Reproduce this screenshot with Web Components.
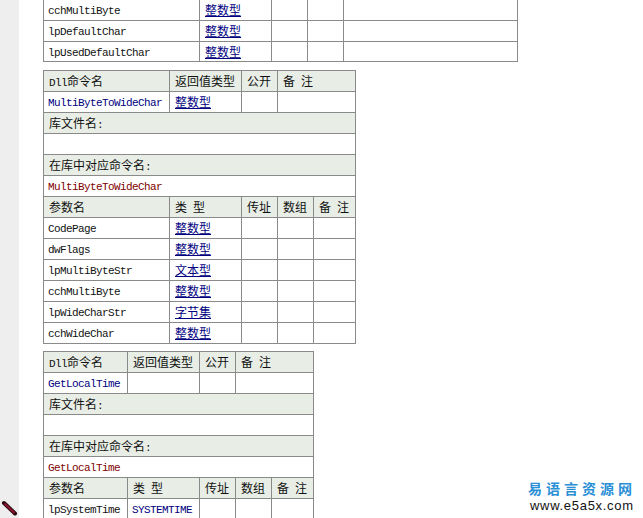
<!DOCTYPE html>
<html lang="zh-CN">
<head>
<meta charset="utf-8">
<style>
  html, body { margin: 0; background: #fff; overflow: hidden; }
</style>
</head>
<body>
<doc-page>
  <api-table style="--cols:156px 72px 36px 36px 174px; margin-bottom:8px">
    <api-row><api-cell>cchMultiByte</api-cell><api-cell kind="link">整数型</api-cell><api-cell></api-cell><api-cell></api-cell><api-cell></api-cell></api-row>
    <api-row><api-cell>lpDefaultChar</api-cell><api-cell kind="link">整数型</api-cell><api-cell></api-cell><api-cell></api-cell><api-cell></api-cell></api-row>
    <api-row short><api-cell>lpUsedDefaultChar</api-cell><api-cell kind="link">整数型</api-cell><api-cell></api-cell><api-cell></api-cell><api-cell></api-cell></api-row>
  </api-table>

  <api-table style="--cols:126px 72px 36px 36px 42px">
    <api-row head><api-cell><tiny-text>Dll</tiny-text>命令名</api-cell><api-cell>返回值类型</api-cell><api-cell>公开</api-cell><api-cell span="2">备 注</api-cell></api-row>
    <api-row><api-cell kind="name">MultiByteToWideChar</api-cell><api-cell kind="link">整数型</api-cell><api-cell></api-cell><api-cell span="2"></api-cell></api-row>
    <api-row head><api-cell span="5">库文件名<tiny-text>:</tiny-text></api-cell></api-row>
    <api-row><api-cell span="5"></api-cell></api-row>
    <api-row head><api-cell span="5">在库中对应命令名<tiny-text>:</tiny-text></api-cell></api-row>
    <api-row><api-cell span="5" kind="alias">MultiByteToWideChar</api-cell></api-row>
    <api-row head><api-cell>参数名</api-cell><api-cell>类 型</api-cell><api-cell>传址</api-cell><api-cell>数组</api-cell><api-cell>备 注</api-cell></api-row>
    <api-row><api-cell>CodePage</api-cell><api-cell kind="link">整数型</api-cell><api-cell></api-cell><api-cell></api-cell><api-cell></api-cell></api-row>
    <api-row><api-cell>dwFlags</api-cell><api-cell kind="link">整数型</api-cell><api-cell></api-cell><api-cell></api-cell><api-cell></api-cell></api-row>
    <api-row><api-cell>lpMultiByteStr</api-cell><api-cell kind="link">文本型</api-cell><api-cell></api-cell><api-cell></api-cell><api-cell></api-cell></api-row>
    <api-row><api-cell>cchMultiByte</api-cell><api-cell kind="link">整数型</api-cell><api-cell></api-cell><api-cell></api-cell><api-cell></api-cell></api-row>
    <api-row><api-cell>lpWideCharStr</api-cell><api-cell kind="link">字节集</api-cell><api-cell></api-cell><api-cell></api-cell><api-cell></api-cell></api-row>
    <api-row><api-cell>cchWideChar</api-cell><api-cell kind="link">整数型</api-cell><api-cell></api-cell><api-cell></api-cell><api-cell></api-cell></api-row>
  </api-table>

  <api-table style="--cols:84px 72px 36px 36px 42px">
    <api-row head><api-cell><tiny-text>Dll</tiny-text>命令名</api-cell><api-cell>返回值类型</api-cell><api-cell>公开</api-cell><api-cell span="2">备 注</api-cell></api-row>
    <api-row><api-cell kind="name">GetLocalTime</api-cell><api-cell></api-cell><api-cell></api-cell><api-cell span="2"></api-cell></api-row>
    <api-row head><api-cell span="5">库文件名<tiny-text>:</tiny-text></api-cell></api-row>
    <api-row><api-cell span="5"></api-cell></api-row>
    <api-row head><api-cell span="5">在库中对应命令名<tiny-text>:</tiny-text></api-cell></api-row>
    <api-row><api-cell span="5" kind="alias">GetLocalTime</api-cell></api-row>
    <api-row head><api-cell>参数名</api-cell><api-cell>类 型</api-cell><api-cell>传址</api-cell><api-cell>数组</api-cell><api-cell>备 注</api-cell></api-row>
    <api-row><api-cell>lpSystemTime</api-cell><api-cell kind="type">SYSTEMTIME</api-cell><api-cell></api-cell><api-cell></api-cell><api-cell></api-cell></api-row>
  </api-table>
</doc-page>

<script>
const pageTemplate = document.createElement("template");
pageTemplate.innerHTML = `
<style>
:host {
  display: flex;
  width: 643px;
  height: 518px;
  overflow: hidden;
  position: relative;
  background: #fff;
}
.side {
  width: 19px;
  flex: none;
  background: #eeeeee;
}
.main {
  padding: 0 0 0 24px;
  margin-top: -1px;
}
.pencil {
  position: absolute;
  left: 1px;
  top: 500px;
}
.logo {
  position: absolute;
  left: 528px;
  top: 481px;
  background: #fff;
}
.logo b {
  display: block;
  font: bold 14px/17px "Liberation Sans", "Noto Sans CJK SC", sans-serif;
  letter-spacing: 4px;
  color: #2b8fd6;
  white-space: nowrap;
}
.logo span {
  display: block;
  font: 13px/15px "Liberation Sans", sans-serif;
  letter-spacing: .7px;
  color: #111;
  padding-left: 2px;
}
</style>
<div class="side"></div>
<div class="main"><slot></slot></div>
<svg class="pencil" width="18" height="17" viewBox="0 0 18 17">
  <path d="M3 3 L14 13.5" stroke="#2a0a10" stroke-width="4" stroke-linecap="round"/>
  <path d="M3.5 3.5 L13.5 13" stroke="#8c1530" stroke-width="2"/>
</svg>
<div class="logo"><b>易语言资源网</b><span>www.e5a5x.com</span></div>
`;

class DocPage extends HTMLElement {
  constructor() {
    super();
    this.attachShadow({ mode: "open" });
    this.shadowRoot.append(pageTemplate.content.cloneNode(true));
  }
}

const tableTemplate = document.createElement("template");
tableTemplate.innerHTML = `
<style>
:host {
  display: block;
  width: fit-content;
  border-top: 1px solid #8a8a8a;
  border-left: 1px solid #8a8a8a;
  margin-bottom: 7px;
  font: 12px/20px "Liberation Mono", "Noto Sans CJK SC", monospace;
  word-spacing: -1.2px;
  color: #111;
}
</style>
<slot></slot>
`;

class ApiTable extends HTMLElement {
  constructor() {
    super();
    this.attachShadow({ mode: "open" });
    this.shadowRoot.append(tableTemplate.content.cloneNode(true));
  }
}

const rowTemplate = document.createElement("template");
rowTemplate.innerHTML = `
<style>
:host {
  display: grid;
  grid-template-columns: var(--cols);
  height: 21px;
}
:host([short]) {
  height: 20px;
}
:host([head]) {
  background: #e8eee6;
}
</style>
<slot></slot>
`;

class ApiRow extends HTMLElement {
  constructor() {
    super();
    this.attachShadow({ mode: "open" });
    this.shadowRoot.append(rowTemplate.content.cloneNode(true));
  }
}

const cellTemplate = document.createElement("template");
cellTemplate.innerHTML = `
<style>
:host {
  display: block;
  box-sizing: border-box;
  min-width: 0;
  border-right: 1px solid #8a8a8a;
  border-bottom: 1px solid #8a8a8a;
  padding: 2px 0 0 5px;
  white-space: nowrap;
  overflow: hidden;
}
:host([latin]) {
  padding: 1px 0 0 4px;
  font-size: 11px;
  letter-spacing: -.6px;
  word-spacing: 0;
}
:host([kind="link"]) {
  color: #000080;
  text-decoration: underline;
}
:host([kind="name"]), :host([kind="type"]) {
  color: #000080;
}
:host([kind="alias"]) {
  color: #800000;
}
</style>
<slot></slot>
`;

class ApiCell extends HTMLElement {
  constructor() {
    super();
    this.attachShadow({ mode: "open" });
    this.shadowRoot.append(cellTemplate.content.cloneNode(true));
  }

  connectedCallback() {
    const span = this.getAttribute("span");
    if (span) this.style.gridColumn = "span " + span;
    // latin-only cells use the narrow 6px-wide text
    if (/^[\x00-\x7f]+$/.test(this.textContent)) this.setAttribute("latin", "");
  }
}

const tinyTemplate = document.createElement("template");
tinyTemplate.innerHTML = `<style>
:host {
  font-size: 11px;
  letter-spacing: -.6px;
}
</style><slot></slot>`;

class TinyText extends HTMLElement {
  constructor() {
    super();
    this.attachShadow({ mode: "open" });
    this.shadowRoot.append(tinyTemplate.content.cloneNode(true));
  }
}

customElements.define("doc-page", DocPage);
customElements.define("api-table", ApiTable);
customElements.define("api-row", ApiRow);
customElements.define("api-cell", ApiCell);
customElements.define("tiny-text", TinyText);
</script>
</body>
</html>
